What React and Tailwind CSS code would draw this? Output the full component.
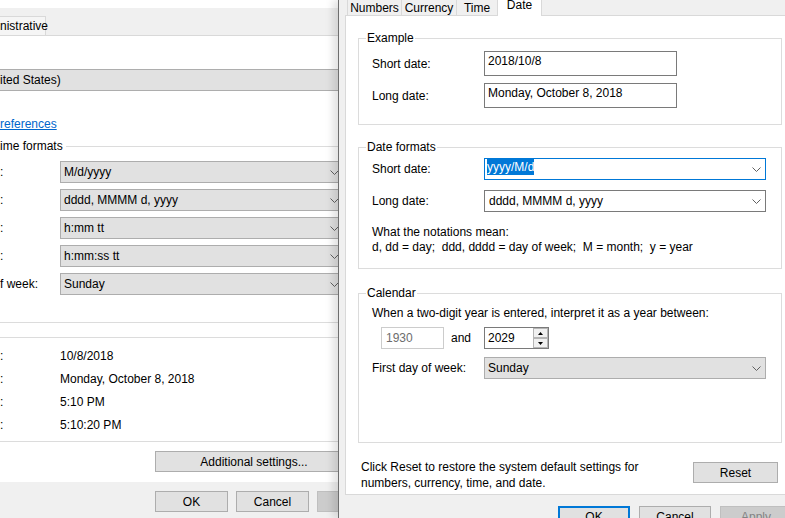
import React from "react";

function Chevron() {
  return (
    <svg width="9" height="5" viewBox="0 0 9 5" className="shrink-0 self-center">
      <path d="M0.5 0.5 L4.5 4.5 L8.5 0.5" fill="none" stroke="#606060" strokeWidth="1" />
    </svg>
  );
}

function GrayCombo({ value, width = "w-[282px]" }) {
  return (
    <div className={`${width} shrink-0 h-[22px] flex items-center justify-between bg-[#e1e1e1] border border-[#adadad] pl-[3px] pr-[4px] leading-[16px]`}>
      <span>{value}</span>
      <Chevron />
    </div>
  );
}

function Legend({ children }) {
  return (
    <span className="absolute left-[7px] -top-[9px] px-[1px] bg-white leading-[16px]">{children}</span>
  );
}

function LeftWindow() {
  const formats = [
    [":", "M/d/yyyy"],
    [":", "dddd, MMMM d, yyyy"],
    [":", "h:mm tt"],
    [":", "h:mm:ss tt"],
    ["f week:", "Sunday"],
  ];
  const examples = [
    [":", "10/8/2018"],
    [":", "Monday, October 8, 2018"],
    [":", "5:10 PM"],
    [":", "5:10:20 PM"],
  ];

  return (
    <div className="absolute left-0 top-0 w-[400px] h-[518px] bg-[#f0f0f0]">
      <div className="h-[8px] bg-white" />
      <div className="h-[28px] flex items-end border-b border-[#d9d9d9]">
        <div className="h-[19px] w-[46px] flex items-center bg-[#f5f5f5] border-t border-r border-[#d9d9d9] leading-[16px]">
          nistrative
        </div>
      </div>

      <div className="h-[446px] pt-[33px] bg-white">
        <div className="w-[344px] h-[22px] flex items-center bg-[#e1e1e1] border-y border-[#adadad] leading-[16px]">
          ited States)
        </div>
        <div className="mt-[25px] leading-[16px] text-[#0066cc] underline">references</div>

        <div className="relative mt-[14px] w-[344px] h-[177px] border-y border-[#dcdcdc]">
          <span className="absolute left-0 -top-[9px] pr-[3px] bg-white leading-[16px]">ime formats</span>
          <div className="pt-[14px] flex flex-col gap-[6px]">
            {formats.map(([label, value], i) => (
              <div key={i} className="flex items-center h-[22px]">
                <span className="w-[60px] shrink-0 leading-[16px]">{label}</span>
                <GrayCombo value={value} width="w-[284px]" />
              </div>
            ))}
          </div>
        </div>

        <div className="mt-[14px] w-[344px] h-[105px] border-y border-[#dcdcdc] pt-[6px]">
          {examples.map(([label, value], i) => (
            <div key={i} className="flex items-center h-[23px] leading-[16px]">
              <span className="w-[60px] shrink-0">{label}</span>
              <span>{value}</span>
            </div>
          ))}
        </div>

        <div className="mt-[9px] ml-[155px] w-[198px] h-[21px] flex items-center justify-center bg-[#e1e1e1] border border-[#adadad] leading-[16px]">
          Additional settings...
        </div>
      </div>

      <div className="pt-[9px] pl-[155px] flex gap-[8px]">
        <div className="w-[73px] shrink-0 h-[21px] flex items-center justify-center bg-[#e1e1e1] border border-[#adadad]">OK</div>
        <div className="w-[73px] shrink-0 h-[21px] flex items-center justify-center bg-[#e1e1e1] border border-[#adadad]">Cancel</div>
        <div className="w-[73px] shrink-0 h-[21px] flex items-center justify-center bg-[#cccccc] border border-[#bfbfbf] text-[#838383]">Apply</div>
      </div>
    </div>
  );
}

function SpinButton({ up }) {
  return (
    <div className="w-[15px] h-[10px] flex items-center justify-center bg-[#f0f0f0] border border-[#b5b5b5]">
      <svg width="5" height="3" viewBox="0 0 5 3">
        {up ? <path d="M2.5 0 L5 3 L0 3 Z" fill="#000" /> : <path d="M0 0 L5 0 L2.5 3 Z" fill="#000" />}
      </svg>
    </div>
  );
}

function RightWindow() {
  return (
    <div className="absolute left-[338px] top-0 w-[460px] h-[518px] bg-[#f0f0f0] border-l border-[#6e6e6e] shadow-[-5px_0_8px_rgba(0,0,0,0.12)]">
      {/* tabs */}
      <div className="flex h-[15px] pl-[8px] items-start">
        <div className="w-[54px] h-[15px] flex items-center justify-center border-l border-[#d9d9d9] leading-[14px]">Numbers</div>
        <div className="w-[55px] h-[15px] flex items-center justify-center border-l border-[#d9d9d9] leading-[14px]">Currency</div>
        <div className="w-[41px] h-[15px] flex items-center justify-center border-l border-[#d9d9d9] leading-[14px]">Time</div>
        <div className="relative z-10 w-[45px] h-[16px] flex justify-center bg-white border-x border-[#d9d9d9]">
          <span className="leading-[12px] -mt-[1px]">Date</span>
        </div>
      </div>

      {/* tab page */}
      <div className="ml-[6px] w-[450px] h-[480px] bg-white border border-[#d9d9d9]">
        <div className="relative ml-[12px] mt-[22px] w-[424px] h-[87px] border border-[#dcdcdc]">
          <Legend>Example</Legend>
          <div className="pt-[12px] flex flex-col gap-[7px]">
            {[
              ["Short date:", "2018/10/8"],
              ["Long date:", "Monday, October 8, 2018"],
            ].map(([label, value]) => (
              <div key={label} className="flex items-center h-[25px]">
                <span className="w-[125px] shrink-0 pl-[13px] leading-[16px]">{label}</span>
                <div className="w-[193px] h-[25px] border border-[#7a7a7a] pl-[3px] pt-[1px] leading-[16px]">{value}</div>
              </div>
            ))}
          </div>
        </div>

        <div className="relative ml-[12px] mt-[22px] w-[424px] h-[122px] border border-[#dcdcdc]">
          <Legend>Date formats</Legend>
          <div className="pt-[10px] flex flex-col gap-[10px]">
            <div className="flex items-center h-[22px]">
              <span className="w-[125px] shrink-0 pl-[13px] leading-[16px]">Short date:</span>
              <div className="w-[282px] h-[22px] flex items-start justify-between border border-[#0078d7] pl-[2px] pr-[4px]">
                <span className="leading-[16px] bg-[#0078d7] text-white">yyyy/M/d</span>
                <Chevron />
              </div>
            </div>
            <div className="flex items-center h-[22px]">
              <span className="w-[125px] shrink-0 pl-[13px] leading-[16px]">Long date:</span>
              <div className="w-[282px] h-[22px] flex items-center justify-between border border-[#7a7a7a] pl-[4px] pr-[4px] leading-[16px]">
                <span>dddd, MMMM d, yyyy</span>
                <Chevron />
              </div>
            </div>
          </div>
          <div className="mt-[13px] pl-[13px] leading-[15px] whitespace-pre">
            <div>What the notations mean:</div>
            <div>{"d, dd = day;  ddd, dddd = day of week;  M = month;  y = year"}</div>
          </div>
        </div>

        <div className="relative ml-[12px] mt-[24px] w-[424px] h-[150px] border border-[#dcdcdc]">
          <Legend>Calendar</Legend>
          <div className="pt-[12px] pl-[13px] leading-[15px]">
            When a two-digit year is entered, interpret it as a year between:
          </div>
          <div className="mt-[6px] h-[22px] flex items-center">
            <div className="ml-[22px] w-[63px] h-[22px] flex items-center border border-[#cccccc] pl-[4px] text-[#6d6d6d] leading-[16px]">1930</div>
            <span className="ml-[7px] w-[33px] leading-[16px]">and</span>
            <div className="w-[65px] h-[22px] flex items-center justify-between border border-[#7a7a7a] pl-[3px] leading-[16px]">
              <span>2029</span>
              <div className="flex flex-col">
                <SpinButton up />
                <SpinButton />
              </div>
            </div>
          </div>
          <div className="mt-[8px] flex items-center h-[22px]">
            <span className="w-[125px] shrink-0 pl-[13px] leading-[16px]">First day of week:</span>
            <GrayCombo value="Sunday" />
          </div>
        </div>

        <div className="mt-[16px] flex">
          <div className="w-[347px] shrink-0 pl-[15px] leading-[16px]">
            <div>Click Reset to restore the system default settings for</div>
            <div>numbers, currency, time, and date.</div>
          </div>
          <div className="mt-[3px] w-[85px] shrink-0 h-[21px] flex items-center justify-center bg-[#e1e1e1] border border-[#adadad]">
            Reset
          </div>
        </div>
      </div>

      {/* dialog buttons */}
      <div className="mt-[11px] ml-[219px] flex gap-[9px]">
        <div className="w-[72px] shrink-0 h-[21px] flex items-center justify-center bg-[#e1e1e1] border border-[#0078d7] shadow-[inset_0_0_0_1px_#0078d7]">OK</div>
        <div className="w-[72px] shrink-0 h-[21px] flex items-center justify-center bg-[#e1e1e1] border border-[#adadad]">Cancel</div>
        <div className="w-[72px] shrink-0 h-[21px] flex items-center justify-center bg-[#cccccc] border border-[#bfbfbf] text-[#838383]">Apply</div>
      </div>
    </div>
  );
}

export default function App() {
  return (
    <div className="relative w-[785px] h-[518px] overflow-hidden bg-[#f0f0f0] text-[12px] text-black font-['Liberation_Sans',Arial,sans-serif]">
      <LeftWindow />
      <RightWindow />
    </div>
  );
}
